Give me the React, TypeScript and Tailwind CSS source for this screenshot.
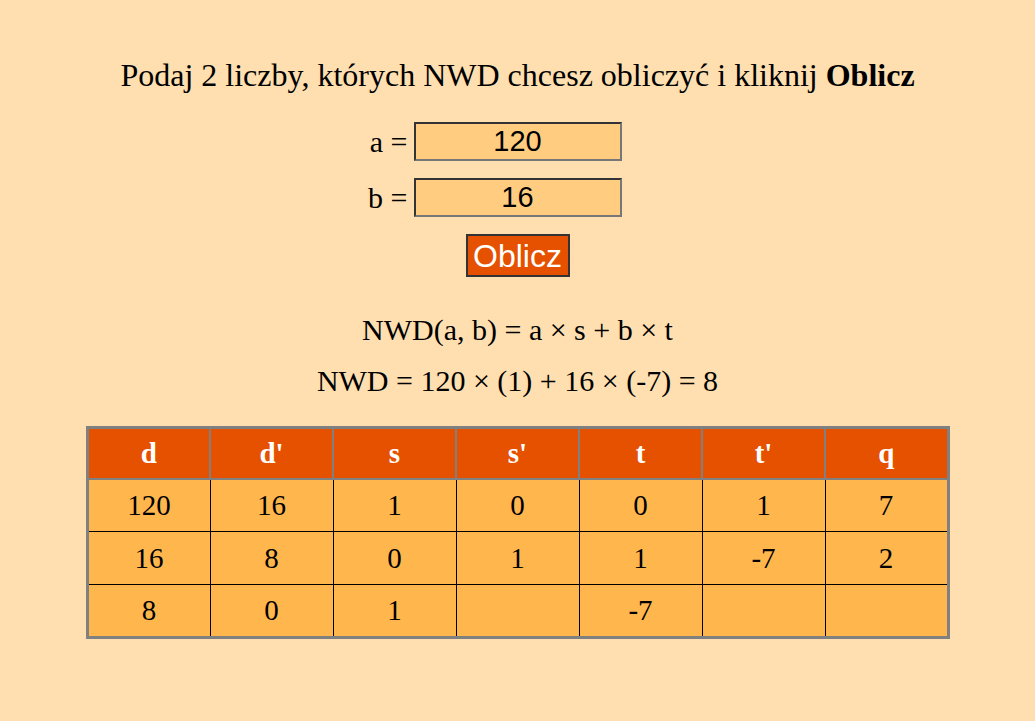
const headers = ["d", "d'", "s", "s'", "t", "t'", "q"];
const rows = [
  ["120", "16", "1", "0", "0", "1", "7"],
  ["16", "8", "0", "1", "1", "-7", "2"],
  ["8", "0", "1", "", "-7", "", ""],
];

function Field({ label, value }: { label: string; value: string }) {
  return (
    <div className="grid grid-cols-[1fr_208px_1fr] items-center">
      <span className="justify-self-end pr-[6px] text-[30px] leading-none">{label}</span>
      <input
        defaultValue={value}
        className="w-[208px] h-[39px] bg-[#FFCC80] border-2 border-[#333] border-r-[#777] border-b-[#777] text-center text-[29px] font-['Liberation_Sans',sans-serif] outline-none"
      />
      <span />
    </div>
  );
}

export default function App() {
  return (
    <div className="min-h-[721px] bg-[#FFDFB0] text-black font-['Liberation_Serif',serif] pt-[57px]">
      <p className="text-center text-[32px] leading-[36px]">
        Podaj 2 liczby, których NWD chcesz obliczyć i kliknij <b>Oblicz</b>
      </p>

      <div className="flex flex-col mt-[29px] gap-[17px]">
        <Field label="a =" value="120" />
        <Field label="b =" value="16" />
        <div className="flex justify-center">
          <button className="w-[104px] h-[43px] bg-[#E65100] border-2 border-[#333] text-white text-[32px] leading-none font-['Liberation_Sans',sans-serif]">
            Oblicz
          </button>
        </div>
      </div>

      <p className="text-center text-[30px] mt-[35px] leading-[36px]">NWD(a, b) = a × s + b × t</p>
      <p className="text-center text-[30px] mt-[15px] leading-[36px]">NWD = 120 × (1) + 16 × (-7) = 8</p>

      <div className="flex justify-center mt-[27px]">
        <table className="w-[864px] border-collapse border-[3px] border-[#808080] text-[29px] table-fixed">
          <thead>
            <tr className="bg-[#E65100] text-white">
              {headers.map((h) => (
                <th key={h} className="h-[51px] border-2 border-[#808080] font-bold leading-none">
                  {h}
                </th>
              ))}
            </tr>
          </thead>
          <tbody>
            {rows.map((r, i) => (
              <tr key={i} className="bg-[#FFB74D]">
                {r.map((c, j) => (
                  <td key={j} className="h-[53px] border border-black text-center leading-none">
                    {c}
                  </td>
                ))}
              </tr>
            ))}
          </tbody>
        </table>
      </div>
    </div>
  );
}
